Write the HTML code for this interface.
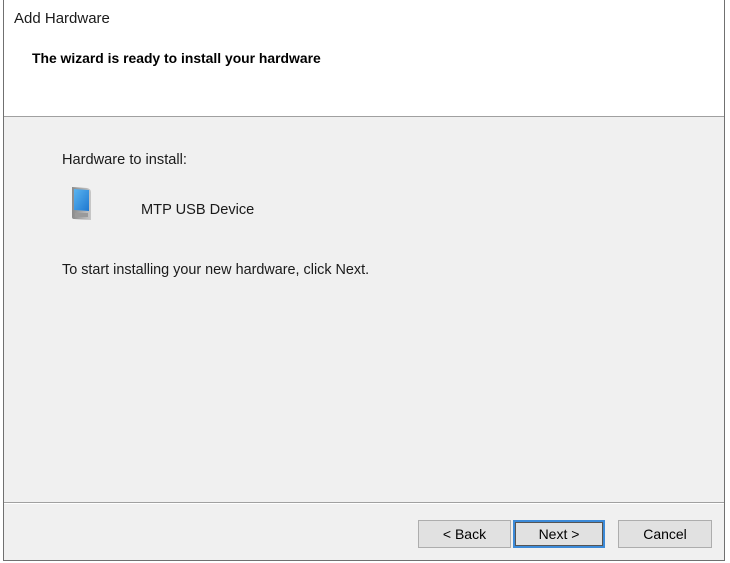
<!DOCTYPE html>
<html><head><style>
body{margin:0;width:730px;height:563px;background:#fff;position:relative;overflow:hidden;font-family:"Liberation Sans",sans-serif;}
.win{position:absolute;left:3px;top:0px;width:720px;height:560px;border:1px solid #707070;border-top:none;background:#f0f0f0;}
.hdr{position:absolute;left:0;top:0;width:720px;height:116px;background:#fff;border-bottom:1px solid #a0a0a0;}
.t{position:absolute;white-space:nowrap;color:#000;}
.sep{position:absolute;left:0;top:502px;width:720px;height:1px;background:#a0a0a0;border-bottom:1px solid #fff;}
.btn{position:absolute;top:520px;height:28px;background:#e1e1e1;border:1px solid #adadad;box-sizing:border-box;font-size:14px;text-align:center;line-height:26px;}
</style></head><body>
<div class="win">
 <div class="hdr">
  <div class="t" style="left:10px;top:10px;font-size:15px;color:#1a1a1a">Add Hardware</div>
  <div class="t" style="left:28px;top:50px;font-size:13.9px;font-weight:bold">The wizard is ready to install your hardware</div>
 </div>
 <div class="t" style="left:58px;top:152px;font-size:14.6px;color:#1a1a1a">Hardware to install:</div>
 <svg style="position:absolute;left:67px;top:186px" width="22" height="36" viewBox="0 0 22 36">
  <defs><linearGradient id="g" x1="0" x2="1"><stop offset="0" stop-color="#8a8a8a"/><stop offset="1" stop-color="#c8c8c8"/></linearGradient>
  <linearGradient id="s" x1="0" y1="0" x2="1" y2="1"><stop offset="0" stop-color="#5ab4f0"/><stop offset="1" stop-color="#1e78d0"/></linearGradient></defs>
  <path d="M1 1 L16 2 Q20 3 20 6 L20 34 L3 33 Q1 33 1 31 Z" fill="url(#g)"/>
  <path d="M3 3 L18 4 L18 25 L3 24 Z" fill="url(#s)"/>
  <rect x="4" y="27" width="13" height="4" fill="#9a9a9a"/>
 </svg>
 <div class="t" style="left:137px;top:202px;font-size:14.6px;color:#1a1a1a">MTP USB Device</div>
 <div class="t" style="left:58px;top:262px;font-size:14.4px;color:#1a1a1a">To start installing your new hardware, click Next.</div>
 <div class="sep"></div>
 <div class="btn" style="left:414px;width:93px">&lt; Back</div>
 <div class="btn" style="left:509px;width:92px;border:2px solid #3c8ad8;line-height:24px;box-shadow:inset 0 0 0 1px #555">Next &gt;</div>
 <div class="btn" style="left:614px;width:94px">Cancel</div>
</div>
</body></html>
